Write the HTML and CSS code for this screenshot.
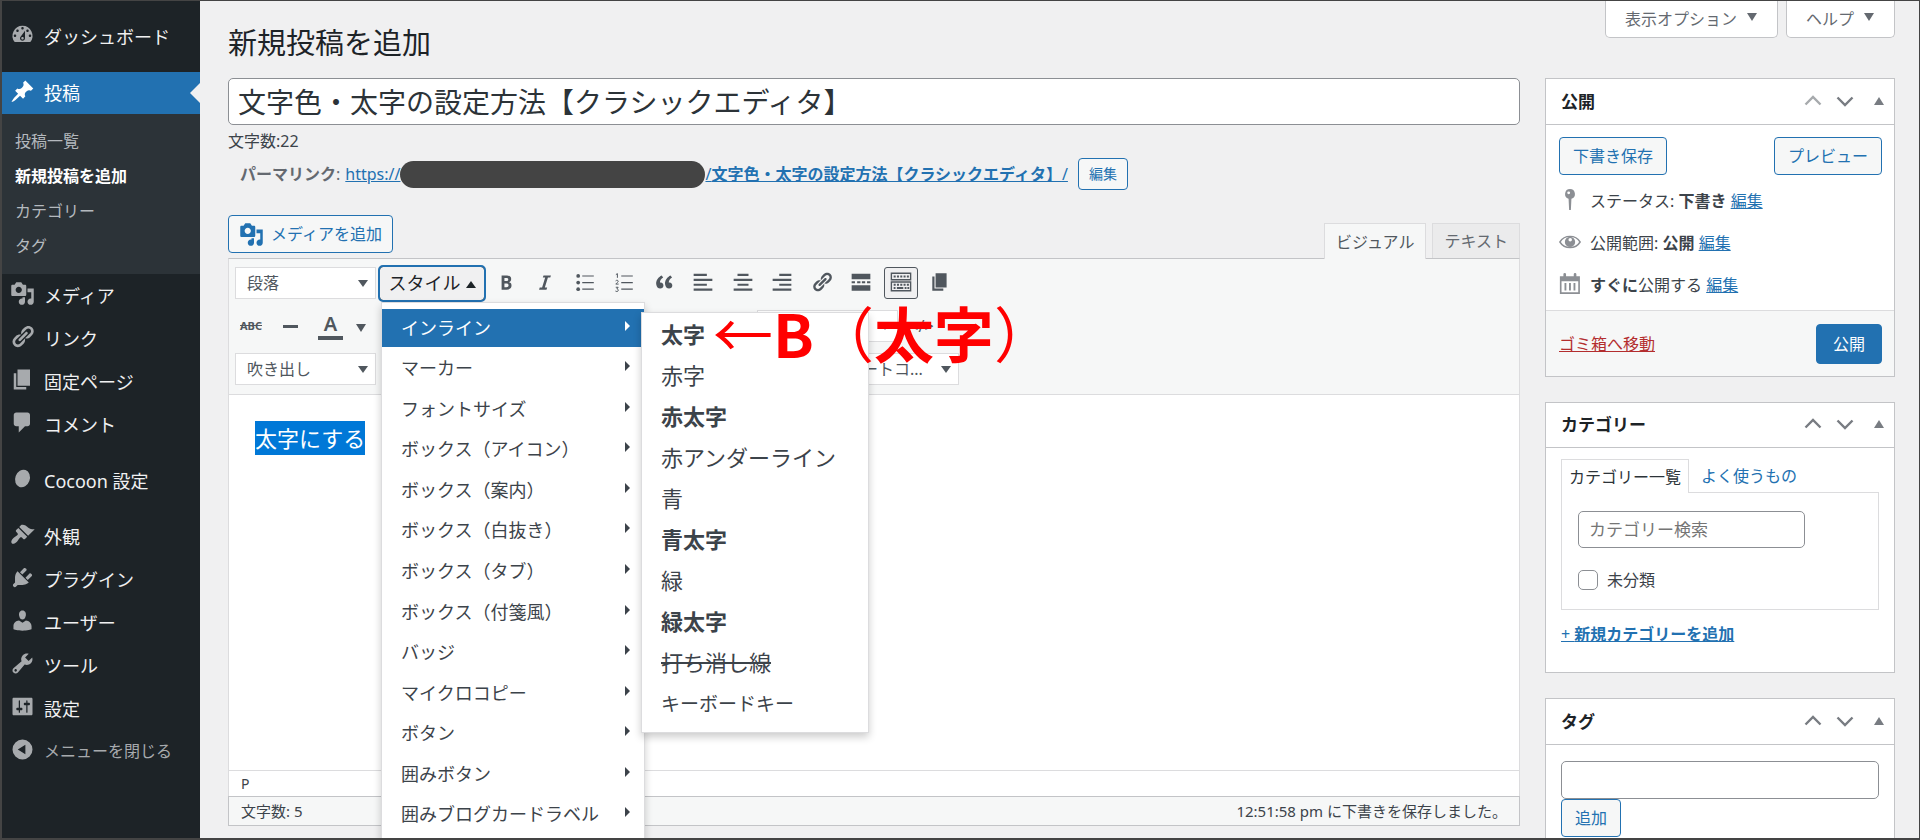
FILE: index.html
```
<!DOCTYPE html>
<html lang="ja">
<head>
<meta charset="utf-8">
<title>新規投稿を追加</title>
<link rel="stylesheet" href="styles.css">
</head>
<body>
<svg class="sprite" aria-hidden="true">
  <symbol id="i-dash" viewBox="0 0 20 20"><path fill-rule="evenodd" d="M3.76 16h12.48A7.998 7.998 0 0 0 10 3a7.998 7.998 0 0 0-6.24 13zM10 4c.55 0 1 .45 1 1s-.45 1-1 1-1-.45-1-1 .45-1 1-1zM6 6c.55 0 1 .45 1 1s-.45 1-1 1-1-.45-1-1 .45-1 1-1zm8 0c.55 0 1 .45 1 1s-.45 1-1 1-1-.45-1-1 .45-1 1-1zm-5.37 5.55L12 7v6c0 1.1-.9 2-2 2s-2-.9-2-2c0-.57.24-1.08.63-1.45zM4 10c.55 0 1 .45 1 1s-.45 1-1 1-1-.45-1-1 .45-1 1-1zm12 0c.55 0 1 .45 1 1s-.45 1-1 1-1-.45-1-1 .45-1 1-1zm-5 3c0-.55-.45-1-1-1s-1 .45-1 1 .45 1 1 1 1-.45 1-1z"/></symbol>
  <symbol id="i-pin" viewBox="0 0 20 20"><path d="M10.44 3.02l1.82-1.82 6.36 6.35-1.83 1.82c-1.05-.68-2.48-.57-3.41.36l-.75.75c-.92.93-1.04 2.35-.35 3.41l-1.83 1.82-2.41-2.41-2.8 2.79c-.42.42-3.38 2.71-3.8 2.29s1.86-3.39 2.28-3.81l2.79-2.79L4.1 9.36l1.83-1.82c1.05.69 2.48.57 3.4-.36l.75-.75c.93-.92 1.05-2.35.36-3.41z"/></symbol>
  <symbol id="i-media" viewBox="0 0 20 20"><path fill-rule="evenodd" d="M13 11V4c0-.55-.45-1-1-1h-1.67L9 1H5L3.67 3H2c-.55 0-1 .45-1 1v7c0 .55.45 1 1 1h10c.55 0 1-.45 1-1zM7 4.5c1.38 0 2.5 1.12 2.5 2.5S8.38 9.5 7 9.5 4.5 8.38 4.5 7 5.62 4.5 7 4.5zM14 6h5v10.5c0 1.38-1.12 2.5-2.5 2.5S14 17.88 14 16.5s1.12-2.5 2.5-2.5c.17 0 .34.02.5.05V9h-3V6zm-4 8.05V13h2v3.5c0 1.38-1.12 2.5-2.5 2.5S7 17.88 7 16.5 8.12 14 9.5 14c.17 0 .34.02.5.05z"/></symbol>
  <symbol id="i-link" viewBox="0 0 20 20"><path d="M17.74 2.76c1.68 1.69 1.68 4.41 0 6.1l-1.53 1.52c-1.12 1.12-2.7 1.47-4.14 1.09l2.62-2.61.76-.77.76-.76c.84-.84.84-2.2 0-3.04-.84-.85-2.2-.85-3.04 0l-.77.76-3.38 3.38c-.37-1.44-.02-3.02 1.1-4.14l1.52-1.53c1.69-1.68 4.42-1.68 6.1 0zM8.59 13.43l5.34-5.34c.42-.42.42-1.1 0-1.52-.44-.43-1.13-.39-1.53 0l-5.33 5.34c-.42.42-.42 1.1 0 1.52.44.43 1.13.39 1.52 0zm-.76 2.29l4.14-4.15c.38 1.44.03 3.02-1.09 4.14l-1.52 1.53c-1.69 1.68-4.41 1.68-6.1 0-1.68-1.68-1.68-4.42 0-6.1l1.53-1.52c1.12-1.12 2.7-1.47 4.14-1.1l-4.14 4.15c-.85.84-.85 2.2 0 3.05.84.84 2.2.84 3.04 0z"/></symbol>
  <symbol id="i-page" viewBox="0 0 20 20"><path d="M6 15V2h10v13H6zm-1 1h8v2H3V5h2v11z"/></symbol>
  <symbol id="i-comment" viewBox="0 0 20 20"><path d="M5 2h9c1.1 0 2 .9 2 2v7c0 1.1-.9 2-2 2h-2l-5 5v-5H5c-1.1 0-2-.9-2-2V4c0-1.1.9-2 2-2z"/></symbol>
  <symbol id="i-cocoon" viewBox="0 0 20 20"><ellipse cx="10" cy="10" rx="5.8" ry="7.2" transform="rotate(20 10 10)"/></symbol>
  <symbol id="i-brush" viewBox="0 0 20 20"><path d="M14.48 11.06L7.41 3.99l1.5-1.5c.5-.56 2.3-.47 3.51.32 1.21.8 1.43 1.28 2.91 2.1 1.18.64 2.45 1.26 4.45.85zm-.71.71L6.7 4.7 4.93 6.47c-.39.39-.39 1.02 0 1.41l1.06 1.06c.39.39.39 1.03 0 1.42-.6.6-1.43 1.11-2.21 1.69-.35.26-.7.53-1.01.84C1.43 14.23.4 16.08 1.4 17.07c.99 1 2.84-.03 4.18-1.36.31-.31.58-.66.85-1.02.57-.78 1.08-1.61 1.69-2.21.39-.39 1.02-.39 1.41 0l1.06 1.06c.39.39 1.02.39 1.41 0z"/></symbol>
  <symbol id="i-plug" viewBox="0 0 20 20"><path d="M13.11 4.36L9.87 7.6 8 5.73l3.24-3.24c.35-.34 1.05-.2 1.56.32.52.51.66 1.21.31 1.55zm-8 1.77l.91-1.12 9.01 9.01-1.19.84c-.71.71-2.63 1.16-3.82 1.16H6.14L4.9 17.26c-.59.59-1.54.59-2.12 0-.59-.58-.59-1.53 0-2.12l1.24-1.24v-3.88c0-1.13.4-3.19 1.09-3.89zm7.26 3.97l3.24-3.24c.34-.35 1.04-.21 1.55.31.52.51.66 1.21.31 1.55l-3.24 3.25z"/></symbol>
  <symbol id="i-user" viewBox="0 0 20 20"><path d="M10 9.25c-2.27 0-2.73-3.44-2.73-3.44C7 4.02 7.82 2 9.97 2c2.16 0 2.98 2.02 2.71 3.81 0 0-.41 3.44-2.68 3.44zm0 2.57L12.72 10c2.39 0 4.52 2.33 4.52 4.53v2.49s-3.65 1.13-7.24 1.13c-3.65 0-7.24-1.13-7.24-1.13v-2.49c0-2.25 1.94-4.48 4.47-4.48z"/></symbol>
  <symbol id="i-wrench" viewBox="0 0 20 20"><path fill-rule="evenodd" d="M16.68 9.77c-1.34 1.34-3.3 1.67-4.95.99l-5.41 6.52c-.99.99-2.59.99-3.58 0s-.99-2.59 0-3.57l6.52-5.42c-.68-1.65-.35-3.61.99-4.95 1.28-1.28 3.12-1.62 4.72-1.06l-2.89 2.89 2.82 2.82 2.86-2.87c.53 1.58.18 3.39-1.08 4.65zM3.81 16.21c.4.39 1.04.39 1.43 0 .4-.4.4-1.04 0-1.43-.39-.4-1.03-.4-1.43 0-.39.39-.39 1.03 0 1.43z"/></symbol>
  <symbol id="i-settings" viewBox="0 0 20 20"><path fill-rule="evenodd" d="M18 16V4c0-.55-.45-1-1-1H3c-.55 0-1 .45-1 1v12c0 .55.45 1 1 1h14c.55 0 1-.45 1-1zM8 11h1c.55 0 1 .45 1 1s-.45 1-1 1H8v1.5c0 .28-.22.5-.5.5s-.5-.22-.5-.5V13H6c-.55 0-1-.45-1-1s.45-1 1-1h1V5.5c0-.28.22-.5.5-.5s.5.22.5.5V11zm5-2h-1c-.55 0-1-.45-1-1s.45-1 1-1h1V5.5c0-.28.22-.5.5-.5s.5.22.5.5V7h1c.55 0 1 .45 1 1s-.45 1-1 1h-1v5.5c0 .28-.22.5-.5.5s-.5-.22-.5-.5V9z"/></symbol>
  <symbol id="i-collapse" viewBox="0 0 20 20"><path fill-rule="evenodd" d="M10 2a8 8 0 1 0 0 16 8 8 0 0 0 0-16zM12.3 6.2v7.6L6.2 10z"/></symbol>
  <symbol id="i-bold" viewBox="0 0 20 20"><path fill-rule="evenodd" d="M6 4v13h4.54c1.37 0 2.46-.33 3.26-1 .8-.66 1.2-1.58 1.2-2.77 0-.84-.17-1.51-.51-2.01s-.9-.85-1.67-1.03v-.09c.57-.1 1.02-.4 1.36-.9s.51-1.13.51-1.91c0-1.14-.39-1.98-1.17-2.5C12.75 4.26 11.5 4 9.78 4H6zm2.57 5.15V6.26h1.36c.73 0 1.27.11 1.61.32.34.22.51.58.51 1.07 0 .54-.16.92-.47 1.15s-.82.35-1.51.35h-1.5zm0 2.19h1.6c1.44 0 2.16.53 2.16 1.61 0 .6-.17 1.05-.51 1.34s-.86.43-1.57.43H8.57v-3.38z"/></symbol>
  <symbol id="i-italic" viewBox="0 0 20 20"><path d="M14.78 6h-2.13l-2.8 9h2.12l-.62 2H4.6l.62-2h2.14l2.8-9H8.03l.62-2h6.75z"/></symbol>
  <symbol id="i-ul" viewBox="0 0 20 20"><circle cx="3.8" cy="4.5" r="1.7"/><circle cx="3.8" cy="10.5" r="1.7"/><circle cx="3.8" cy="16.5" r="1.7"/><path d="M7.5 4H18v1.1H7.5zM7.5 10H18v1.1H7.5zM7.5 16H18v1.1H7.5z"/></symbol>
  <symbol id="i-ol" viewBox="0 0 20 20"><path d="M7.5 4H18v1.1H7.5zM7.5 10H18v1.1H7.5zM7.5 16H18v1.1H7.5z"/><path fill="none" stroke="currentColor" stroke-width=".9" d="M2.6 3.3L4 2.4v3.8M2.4 9c.8-1 2.6-.6 2.3.6-.2.7-1.5 1.4-2.2 2.3h2.6M2.5 14.8h2.2l-1.2 1.5c1.7-.1 1.8 2.3.1 2.3-.6 0-1-.1-1.4-.4"/></symbol>
  <symbol id="i-quote" viewBox="0 0 20 20"><path d="M9.49 13.22c0-.74-.2-1.38-.61-1.9-.62-.78-1.83-.88-2.53-.72-.29-1.65 1.11-3.75 2.92-4.65L7.88 4c-2.73 1.3-5.42 4.28-4.96 8.05C3.21 14.43 4.59 16 6.54 16c.85 0 1.56-.25 2.12-.75s.83-1.18.83-2.03zm8.05 0c0-.74-.2-1.38-.61-1.9-.63-.78-1.83-.88-2.53-.72-.29-1.65 1.11-3.75 2.92-4.65L15.93 4c-2.73 1.3-5.41 4.28-4.95 8.05.29 2.38 1.66 3.95 3.61 3.95.85 0 1.56-.25 2.12-.75s.83-1.18.83-2.03z"/></symbol>
  <symbol id="i-left" viewBox="0 0 20 20"><path d="M1.5 2.5h12v2h-12zM1.5 7h17v2h-17zM1.5 11.5h12v2h-12zM1.5 16h17v2h-17z"/></symbol>
  <symbol id="i-center" viewBox="0 0 20 20"><path d="M5 2.5h10v2H5zM1.5 7h17v2h-17zM5 11.5h10v2H5zM1.5 16h17v2h-17z"/></symbol>
  <symbol id="i-right" viewBox="0 0 20 20"><path d="M7.5 2.5h11v2h-11zM1.5 7h17v2h-17zM7.5 11.500h11v2h-11zM1.5 16h17v2h-17z"/></symbol>
  <symbol id="i-more" viewBox="0 0 20 20"><path d="M1.5 2.500h17v5h-17zM1.5 13h17v5h-17zM1.5 9.400h3v1.800h-3zM6.500 9.400h3v1.800h-3zM10.800 9.400h3v1.800h-3zM15.500 9.400h3v1.800h-3z"/></symbol>
  <symbol id="i-keys" viewBox="0 0 24 22"><path fill="none" stroke="currentColor" stroke-width="1.5" d="M1.500 1.500h21v7h-21zM1.500 11h21v9.500h-21z"/><path fill="none" stroke="currentColor" stroke-width="2" stroke-dasharray="2.200 1.400" d="M4 5h17M4 14h17"/><path d="M4 16.500h2v2H4zM7.500 16.500h7v2h-7zM16 16.500h2v2h-2zM19 16.500h2v2h-2z"/></symbol>
  <symbol id="i-pushpin" viewBox="0 0 20 20"><path fill-rule="evenodd" d="M10 0a4.500 4.500 0 0 1 1.300 8.800L10.800 19H9.200L8.700 8.800A4.500 4.500 0 0 1 10 0zM8.800 2.200a1.300 1.300 0 1 0 0 2.600 1.300 1.300 0 0 0 0-2.600z"/></symbol>
  <symbol id="i-eye" viewBox="0 0 20 20"><path fill="none" stroke="currentColor" stroke-width="1.300" d="M.8 10C5 3.200 15 3.200 19.200 10 15 16.800 5 16.800.8 10z"/><path fill-rule="evenodd" d="M10 5.200a4.700 4.700 0 1 0 0 9.400 4.700 4.700 0 0 0 0-9.400zm.2 1.200a1.600 1.600 0 1 1 0 3.200 1.600 1.600 0 0 1 0-3.200z"/></symbol>
  <symbol id="i-cal" viewBox="0 0 20 20"><path fill-rule="evenodd" d="M.8 3H4V1.200a1.200 1.200 0 0 1 2.400 0V3h7V1.200a1.200 1.200 0 0 1 2.400 0V3H19v16H.8zM2.300 7.500V17.600H17.500V7.500zM5 9h1.700v7H5zM9.100 9h1.700v7H9.100zM13.200 9h1.700v7h-1.700z"/></symbol>
  <symbol id="i-up" viewBox="0 0 20 20"><path fill="none" stroke="currentColor" stroke-width="2.400" d="M2.500 13.500L10 6l7.500 7.500"/></symbol>
  <symbol id="i-down" viewBox="0 0 20 20"><path fill="none" stroke="currentColor" stroke-width="2.400" d="M2.500 6.500L10 14l7.500-7.500"/></symbol>
</svg>
<div class="frame">
  <nav class="side">
    <a class="nav first" href="#"><svg class="ico"><use href="#i-dash"/></svg>ダッシュボード</a>
    <a class="nav current" href="#"><svg class="ico"><use href="#i-pin"/></svg>投稿</a>
    <div class="sub">
      <a href="#">投稿一覧</a>
      <a class="on" href="#">新規投稿を追加</a>
      <a href="#">カテゴリー</a>
      <a href="#">タグ</a>
    </div>
    <a class="nav" href="#"><svg class="ico"><use href="#i-media"/></svg>メディア</a>
    <a class="nav" href="#"><svg class="ico"><use href="#i-link"/></svg>リンク</a>
    <a class="nav" href="#"><svg class="ico"><use href="#i-page"/></svg>固定ページ</a>
    <a class="nav" href="#"><svg class="ico"><use href="#i-comment"/></svg>コメント</a>
    <a class="nav group" href="#"><svg class="ico"><use href="#i-cocoon"/></svg>Cocoon 設定</a>
    <a class="nav group" href="#"><svg class="ico"><use href="#i-brush"/></svg>外観</a>
    <a class="nav" href="#"><svg class="ico"><use href="#i-plug"/></svg>プラグイン</a>
    <a class="nav" href="#"><svg class="ico"><use href="#i-user"/></svg>ユーザー</a>
    <a class="nav" href="#"><svg class="ico"><use href="#i-wrench"/></svg>ツール</a>
    <a class="nav" href="#"><svg class="ico"><use href="#i-settings"/></svg>設定</a>
    <button class="nav collapse" type="button"><svg class="ico"><use href="#i-collapse"/></svg>メニューを閉じる</button>
  </nav>
  <main class="main">
    <header class="head">
      <h1>新規投稿を追加</h1>
      <div class="screen">
        <button type="button">表示オプション<i class="tri down"></i></button>
        <button type="button">ヘルプ<i class="tri down"></i></button>
      </div>
    </header>
    <div class="cols">
      <section class="post">
        <input class="title" type="text" aria-label="タイトル" value="文字色・太字の設定方法【クラシックエディタ】">
        <div class="count">文字数:22</div>
        <div class="perma">
          <strong>パーマリンク</strong><span>:</span>
          <a class="url" href="#">https://</a><span class="mask"></span><a class="url" href="#">/<b>文字色・太字の設定方法【クラシックエディタ】</b>/</a>
          <button class="btn small" type="button">編集</button>
        </div>
        <div class="above">
          <button class="btn media" type="button"><svg class="ico"><use href="#i-media"/></svg>メディアを追加</button>
          <div class="modes">
            <button class="mode on" type="button">ビジュアル</button>
            <button class="mode" type="button">テキスト</button>
          </div>
        </div>
        <div class="editor">
          <div class="tools">
            <div class="row">
              <span class="pick"><select aria-label="段落の書式"><option>段落</option></select></span>
              <div class="drop">
                <button class="style" type="button" aria-expanded="true">スタイル<i class="tri up"></i></button>
                <div class="menu">
                  <div class="list">
                    <button class="on" type="button">インライン</button>
                    <button type="button">マーカー</button>
                    <button type="button">フォントサイズ</button>
                    <button type="button">ボックス（アイコン）</button>
                    <button type="button">ボックス（案内）</button>
                    <button type="button">ボックス（白抜き）</button>
                    <button type="button">ボックス（タブ）</button>
                    <button type="button">ボックス（付箋風）</button>
                    <button type="button">バッジ</button>
                    <button type="button">マイクロコピー</button>
                    <button type="button">ボタン</button>
                    <button type="button">囲みボタン</button>
                    <button type="button">囲みブログカードラベル</button>
                  </div>
                  <div class="submenu">
                    <button type="button"><b>太字</b></button>
                    <button type="button">赤字</button>
                    <button type="button"><b>赤太字</b></button>
                    <button type="button">赤アンダーライン</button>
                    <button type="button">青</button>
                    <button type="button"><b>青太字</b></button>
                    <button type="button">緑</button>
                    <button type="button"><b>緑太字</b></button>
                    <button type="button"><s>打ち消し線</s></button>
                    <button type="button"><kbd>キーボードキー</kbd></button>
                    <div class="note"><span>←</span>B<span>（</span>太字<span>）</span></div>
                  </div>
                </div>
              </div>
              <div class="icons">
                <button type="button" aria-label="太字"><svg><use href="#i-bold"/></svg></button>
                <button type="button" aria-label="イタリック"><svg><use href="#i-italic"/></svg></button>
                <button type="button" aria-label="番号なしリスト"><svg><use href="#i-ul"/></svg></button>
                <button type="button" aria-label="番号付きリスト"><svg><use href="#i-ol"/></svg></button>
                <button type="button" aria-label="引用"><svg><use href="#i-quote"/></svg></button>
                <button type="button" aria-label="左寄せ"><svg><use href="#i-left"/></svg></button>
                <button type="button" aria-label="中央揃え"><svg><use href="#i-center"/></svg></button>
                <button type="button" aria-label="右寄せ"><svg><use href="#i-right"/></svg></button>
                <button type="button" aria-label="リンク"><svg><use href="#i-link"/></svg></button>
                <button type="button" aria-label="続きを読む"><svg><use href="#i-more"/></svg></button>
                <button type="button" class="active" aria-label="ツールバー切り替え"><svg><use href="#i-keys"/></svg></button>
                <button type="button" aria-label="ページ"><svg><use href="#i-page"/></svg></button>
              </div>
            </div>
            <div class="row">
              <button class="tool abc" type="button"><s>ABC</s></button>
              <button class="tool" type="button" aria-label="横ライン"><i class="rule"></i></button>
              <button class="tool color" type="button">A</button>
              <button class="tool caret" type="button" aria-label="文字色"><i class="tri down"></i></button>
              <span class="pick far2"><select aria-label="フォントサイズ"><option></option></select></span>
              <button class="tool code" type="button">&lt;/&gt;</button>
            </div>
            <div class="row">
              <span class="pick"><select aria-label="吹き出し"><option>吹き出し</option></select></span>
              <span class="pick far3"><select aria-label="ショートコード"><option>ショートコ...</option></select></span>
            </div>
          </div>
          <div class="body"><mark>太字にする</mark></div>
          <div class="path">P</div>
          <div class="status"><span>文字数: 5</span><span>12:51:58 pm に下書きを保存しました。</span></div>
        </div>
      </section>
      <aside class="boxes">
        <section class="box">
          <div class="box-head"><h2>公開</h2><button type="button" class="dim" aria-label="上に移動"><svg><use href="#i-up"/></svg></button><button type="button" aria-label="下に移動"><svg><use href="#i-down"/></svg></button><button type="button" aria-label="閉じる"><i class="tri up"></i></button></div>
          <div class="pub">
            <div class="pair"><button class="btn" type="button">下書き保存</button><button class="btn" type="button">プレビュー</button></div>
            <div class="info"><svg><use href="#i-pushpin"/></svg><span>ステータス: <b>下書き</b> <a href="#">編集</a></span></div>
            <div class="info"><svg><use href="#i-eye"/></svg><span>公開範囲: <b>公開</b> <a href="#">編集</a></span></div>
            <div class="info"><svg><use href="#i-cal"/></svg><span><b>すぐに</b>公開する <a href="#">編集</a></span></div>
          </div>
          <div class="pub-foot"><a class="trash" href="#">ゴミ箱へ移動</a><button class="btn primary" type="button">公開</button></div>
        </section>
        <section class="box cats">
          <div class="box-head"><h2>カテゴリー</h2><button type="button" aria-label="上に移動"><svg><use href="#i-up"/></svg></button><button type="button" aria-label="下に移動"><svg><use href="#i-down"/></svg></button><button type="button" aria-label="閉じる"><i class="tri up"></i></button></div>
          <div class="inside">
            <div class="tabs"><button class="tab on" type="button">カテゴリー一覧</button><button class="tab" type="button">よく使うもの</button></div>
            <div class="panel">
              <input class="search" type="text" placeholder="カテゴリー検索" aria-label="カテゴリー検索">
              <label class="check"><input type="checkbox">未分類</label>
            </div>
            <a class="add" href="#">+ <b>新規カテゴリーを追加</b></a>
          </div>
        </section>
        <section class="box">
          <div class="box-head"><h2>タグ</h2><button type="button" aria-label="上に移動"><svg><use href="#i-up"/></svg></button><button type="button" aria-label="下に移動"><svg><use href="#i-down"/></svg></button><button type="button" aria-label="閉じる"><i class="tri up"></i></button></div>
          <div class="inside tags">
            <input class="search" type="text" aria-label="タグ">
            <button class="btn" type="button">追加</button>
          </div>
        </section>
      </aside>
    </div>
  </main>
</div>
</body>
</html>
```

FILE: styles.css
```
* { box-sizing: border-box; }
body {
  margin: 0;
  background: #f0f0f1;
  color: #3c434a;
  font: 16px/24px "Noto Sans", "Noto Sans CJK JP", sans-serif;
}
button, input, select { font: inherit; color: inherit; margin: 0; }
button { background: none; border: 0; padding: 0; white-space: nowrap; }
a { color: #2271b1; }
svg { fill: currentColor; flex: none; }
h1, h2 { margin: 0; }
.sprite { display: none; }

.frame {
  display: flex;
  height: 100vh;
  overflow: hidden;
  border: solid #444;
  border-width: 1px 1px 2px 2px;
}

/* Triangles used as carets */
.tri { display: inline-block; border: solid transparent; border-width: 0 5px; }
.tri.down { border-top: 8px solid currentColor; }
.tri.up { border-bottom: 8px solid currentColor; }

/* Admin menu */
.side { width: 198px; flex: none; background: #1d2327; padding-top: 14px; }
.nav {
  display: flex;
  align-items: center;
  gap: 9px;
  width: 100%;
  height: 43px;
  padding-left: 8px;
  color: #f0f0f1;
  font-size: 18px;
  text-decoration: none;
}
.ico { width: 25px; height: 25px; color: #a7aaad; }
.nav .ico { margin-bottom: 4px; }
.nav.first { margin-bottom: 14px; }
.nav.current { position: relative; height: 42px; background: #2271b1; color: #fff; }
.nav.current .ico { color: #fff; }
.nav.current::after {
  content: "";
  position: absolute;
  right: 0;
  top: 11px;
  border: 10px solid transparent;
  border-left-width: 0;
  border-right-color: #f0f0f1;
}
.nav.group { margin-top: 13px; }
.nav.collapse { color: #a7aaad; font-size: 16px; height: 42px; }
.sub { background: #2c3338; padding: 10px 13px; }
.sub a { display: block; line-height: 35px; color: #b4b9be; text-decoration: none; }
.sub a.on { color: #fff; font-weight: 700; }

/* Page header */
.main { flex: 1; min-width: 0; padding: 0 24px 0 28px; }
.head { display: flex; justify-content: space-between; align-items: flex-start; height: 77px; }
.head h1 { font-size: 29px; font-weight: 400; line-height: 36px; color: #1d2327; padding-top: 24px; }
.screen { display: flex; gap: 8px; }
.screen button {
  height: 37px;
  padding: 0 20px 0 19px;
  background: #fff;
  border: 1px solid #c3c4c7;
  border-top: 0;
  border-radius: 0 0 5px 5px;
  color: #646970;
}
.screen .tri { margin: 0 0 4px 10px; }
.cols { display: flex; gap: 25px; align-items: flex-start; }
.post { flex: 1; min-width: 0; }
.boxes { width: 350px; flex: none; display: flex; flex-direction: column; gap: 25px; }

/* Title and permalink */
.title {
  display: block;
  width: 100%;
  height: 47px;
  padding: 0 9px 2px;
  border: 1px solid #8c8f94;
  border-radius: 5px;
  background: #fff;
  color: #2c3338;
  font-size: 28px;
}
.count { line-height: 32px; }
.perma { display: flex; align-items: center; height: 34px; padding-left: 12px; color: #646970; }
.perma .url { white-space: pre; }
.perma span + .url { margin-left: 5px; }
.perma .mask + .url { margin-left: 0; }
.mask { width: 305px; height: 27px; border-radius: 14px; background: #444; }
.btn {
  height: 38px;
  padding: 0 13px;
  border: 1px solid #2271b1;
  border-radius: 4px;
  background: #f6f7f7;
  color: #2271b1;
}
.btn.small { height: 32px; padding: 0 10px; margin-left: 10px; font-size: 14px; }
.above { display: flex; justify-content: space-between; align-items: flex-end; height: 67px; }
.media { display: flex; align-items: center; gap: 7px; padding: 0 10px; margin-bottom: 5px; }
.media .ico { color: #2271b1; }
.modes { display: flex; gap: 6px; }
.mode {
  height: 35px;
  padding: 0 11px;
  border: 1px solid #dcdcde;
  border-bottom: 0;
  background: #ebebec;
  color: #646970;
}
.mode.on { position: relative; height: 36px; margin-bottom: -1px; background: #f6f7f7; color: #50575e; }

/* Editor */
.editor { border: 1px solid #dcdcde; border-top-color: #c3c4c7; background: #fff; }
.tools {
  display: flex;
  flex-direction: column;
  gap: 11px;
  padding: 8px 6px 9px;
  background: #f6f7f7;
  border-bottom: 1px solid #dcdcde;
}
.row { display: flex; align-items: center; height: 32px; color: #50575e; }
.pick { position: relative; width: 141px; }
.pick select {
  display: block;
  width: 100%;
  height: 32px;
  padding: 0 11px;
  appearance: none;
  border: 1px solid #dcdcde;
  border-radius: 0;
  background: #fff;
}
.pick::after {
  content: "";
  position: absolute;
  right: 8px;
  top: 13px;
  border: 5px solid transparent;
  border-top: 7px solid #50575e;
  border-bottom: 0;
}
.drop { position: relative; margin: -2px 0 -2px 3px; }
.style {
  width: 106px;
  height: 35px;
  border: 1px solid #1d2327;
  border-radius: 4px;
  outline: 2px solid #2271b1;
  outline-offset: -1px;
  background: #f0f0f1;
  color: #1d2327;
  font-size: 18px;
}
.style .tri { margin-left: 5px; border-bottom-width: 7px; margin-bottom: 2px; }
.icons { display: flex; justify-content: space-between; width: 468px; margin-left: 4px; }
.icons button { display: grid; place-items: center; width: 34px; height: 32px; border-radius: 3px; padding-bottom: 3px; }
.icons svg { width: 22px; height: 22px; }
.icons .active { border: 1px solid #50575e; background: #f0f0f1; }
.tool { width: 39px; height: 32px; }
.abc { width: 32px; margin-right: 4px; font-size: 11px; font-weight: 700; }
.rule { display: block; width: 15px; height: 3px; margin: 0 auto; background: #50575e; }
.color { width: 25px; height: 27px; margin: 0 8px; border-bottom: 4px solid #50575e; font-size: 20px; line-height: 20px; font-weight: 600; }
.caret { width: 20px; }
.far2 { margin-left: 386px; }
.far3 { margin-left: 442px; }
.code { margin-left: 4px; }
.body { min-height: 375px; padding: 26px; font-size: 22px; line-height: 34px; }
mark { display: inline-block; background: #0078d7; color: #fff; }
.path { height: 26px; padding: 0 12px; border-top: 1px solid #dcdcde; font-size: 14px; line-height: 26px; }
.status {
  display: flex;
  justify-content: space-between;
  height: 30px;
  margin: 0 -1px -1px;
  padding: 0 12px;
  border: 1px solid #c3c4c7;
  background: #f6f7f7;
  font-size: 15px;
  line-height: 28px;
}

/* Open format menu */
.menu {
  position: absolute;
  z-index: 2;
  left: 2px;
  top: 36px;
  width: 264px;
  padding: 6px 0;
  border: 1px solid #dcdcde;
  background: #fff;
  box-shadow: 0 4px 8px rgba(0, 0, 0, .2);
  color: #3c434a;
}
.list { display: flex; flex-direction: column; justify-content: space-between; height: 525px; }
.list button { position: relative; height: 38px; padding: 0 19px; text-align: left; font-size: 18px; }
.list button::after {
  content: "";
  position: absolute;
  right: 14px;
  top: 12px;
  border: 5px solid transparent;
  border-left-color: currentColor;
  border-right: 0;
}
.list .on { background: #2271b1; color: #fff; }
.submenu {
  position: absolute;
  left: 259px;
  top: 9px;
  width: 228px;
  padding: 1px 0 8px;
  border: 1px solid #dcdcde;
  background: #fff;
  box-shadow: 0 4px 8px rgba(0, 0, 0, .2);
}
.submenu button { display: block; width: 100%; height: 41px; padding: 0 19px; text-align: left; font-size: 22px; }
.submenu kbd { font-family: inherit; font-size: 19px; }
.note {
  position: absolute;
  left: 71px;
  top: -21px;
  color: #f00;
  font: 700 60px/80px "Noto Sans CJK JP", sans-serif;
  white-space: nowrap;
}
.note span { font-weight: 400; }

/* Side boxes */
.box { border: 1px solid #c3c4c7; background: #fff; }
.box-head { display: flex; align-items: center; height: 46px; padding: 0 6px 0 15px; border-bottom: 1px solid #c3c4c7; color: #787c82; }
.cats .box-head { height: 45px; }
.box-head h2 { flex: 1; font-size: 17px; font-weight: 700; color: #1d2327; }
.box-head button { display: grid; place-items: center; width: 32px; height: 32px; padding-bottom: 2px; }
.box-head button:last-child { width: 19px; margin-left: 8px; }
.box-head svg { width: 20px; height: 20px; }
.dim { color: #a7aaad; }
.pub { padding: 12px 12px 4px 13px; }
.pair { display: flex; justify-content: space-between; margin-bottom: 5px; }
.info { display: flex; align-items: center; gap: 9px; height: 42px; }
.info svg { width: 22px; height: 22px; margin-bottom: 3px; color: #8c8f94; }
.pub-foot {
  display: flex;
  align-items: center;
  justify-content: space-between;
  height: 66px;
  padding: 0 12px 0 13px;
  border-top: 1px solid #dcdcde;
  background: #f6f7f7;
}
.trash { color: #b32d2e; }
.primary { height: 40px; padding: 0 16px; background: #2271b1; color: #fff; }
.inside { padding: 11px 15px 26px; }
.tabs { display: flex; }
.tab { height: 33px; padding: 0 12px; color: #2271b1; }
.tab.on { position: relative; height: 34px; margin-bottom: -1px; padding: 0 7px; border: 1px solid #dcdcde; border-bottom: 0; background: #fff; color: #2c3338; }
.panel { height: 118px; margin-bottom: 12px; padding: 18px 16px; border: 1px solid #dcdcde; }
.search { display: block; width: 227px; height: 37px; padding: 0 10px; border: 1px solid #8c8f94; border-radius: 5px; background: #fff; font-size: 17px; }
.search::placeholder { color: #757575; }
.check { display: flex; align-items: center; gap: 9px; margin-top: 20px; }
.check input { width: 20px; height: 20px; appearance: none; border: 1px solid #8c8f94; border-radius: 5px; background: #fff; }
.tags { padding-top: 16px; }
.tags .search { width: 100%; height: 38px; }
```
